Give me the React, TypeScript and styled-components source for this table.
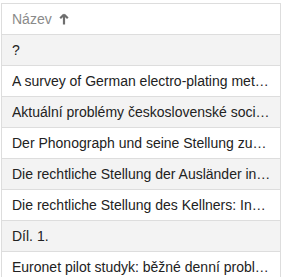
import React from "react";
import styled, { createGlobalStyle } from "styled-components";

const Global = createGlobalStyle`
  html, body { margin: 0; padding: 0; background: #fff; }
  body { font-family: "Liberation Sans", Arial, sans-serif; }
`;

const Wrap = styled.div`
  padding: 3px 0 0 1px;
  width: 281px;
  box-sizing: border-box;
`;

const Table = styled.div`
  border: 1px solid #dddddd;
  border-bottom: none;
  display: flex;
  flex-direction: column;
`;

const HeaderRow = styled.div`
  height: 30px;
  display: flex;
  align-items: center;
  padding: 0 10px;
  border-bottom: 1px solid #dddddd;
  background: #fff;
  gap: 7px;
`;

const HeaderLabel = styled.span`
  font-size: 14px;
  color: #8a8a8a;
`;

const Row = styled.div<{ $striped: boolean }>`
  height: 30px;
  display: flex;
  align-items: center;
  padding: 0 8px 0 10px;
  border-bottom: 1px solid #dddddd;
  background: ${(p) => (p.$striped ? "#f3f3f3" : "#fff")};
`;

const Cell = styled.span`
  font-size: 14px;
  color: #222;
  white-space: nowrap;
  overflow: hidden;
  text-overflow: ellipsis;
  min-width: 0;
`;

const ArrowUp = () => (
  <svg width="10" height="12" viewBox="0 0 10 12">
    <path d="M5 1.5 L1.2 5.3 M5 1.5 L8.8 5.3 M5 1.5 L5 11.5" stroke="#6e6e6e" strokeWidth="2.2" fill="none" />
  </svg>
);

const rows = [
  "?",
  "A survey of German electro-plating met…",
  "Aktuální problémy československé soci…",
  "Der Phonograph und seine Stellung zu…",
  "Die rechtliche Stellung der Ausländer in…",
  "Die rechtliche Stellung des Kellners: In…",
  "Díl. 1.",
  "Euronet pilot studyk: běžné denní probl…",
];

export default function App() {
  return (
    <>
      <Global />
      <Wrap>
        <Table>
          <HeaderRow>
            <HeaderLabel>Název</HeaderLabel>
            <ArrowUp />
          </HeaderRow>
          {rows.map((r, i) => (
            <Row key={i} $striped={i % 2 === 0}>
              <Cell>{r}</Cell>
            </Row>
          ))}
        </Table>
      </Wrap>
    </>
  );
}
